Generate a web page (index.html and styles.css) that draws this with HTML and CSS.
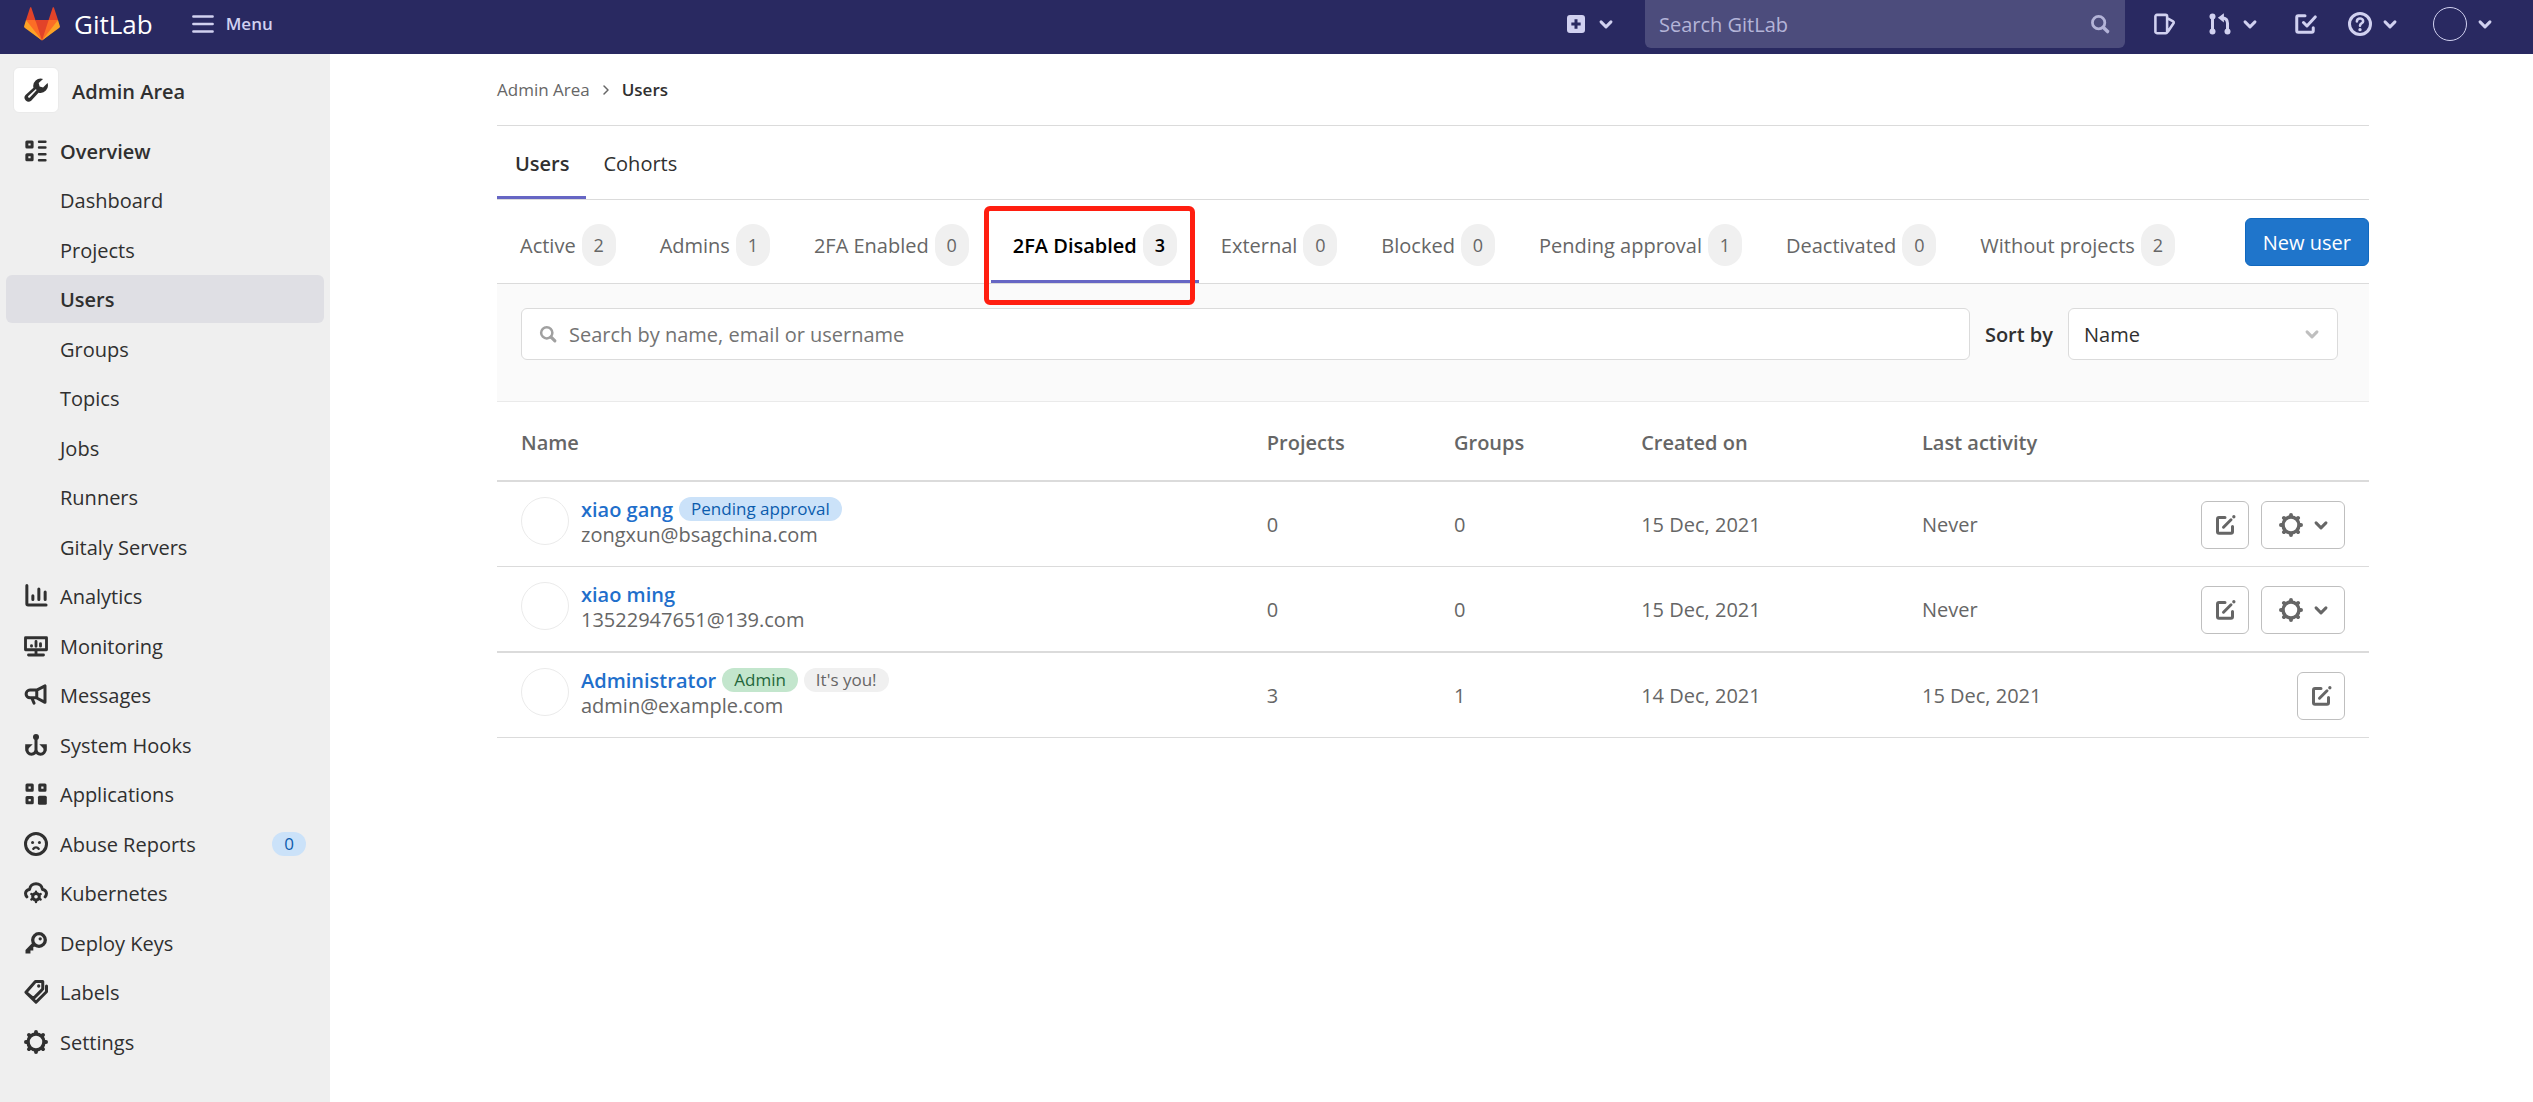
FILE: index.html
```html
<!DOCTYPE html>
<html lang="en">
<head>
<meta charset="utf-8">
<title>Users · Admin Area · GitLab</title>
<link rel="stylesheet" href="styles.css">
</head>
<body>
<svg class="sprite" aria-hidden="true">
  <symbol id="i-chevron" viewBox="0 0 16 16"><path class="s2" d="M4.7 6.6 8 9.900l3.300-3.300"/></symbol>
  <symbol id="i-menu" viewBox="0 0 16 16"><path class="s2" d="M1.600 3h12.800M1.600 8h12.800M1.600 13h12.800" stroke-width="1.700"/></symbol>
  <symbol id="i-plus" viewBox="0 0 16 16"><path class="f" fill-rule="evenodd" d="M4 2h8a2 2 0 0 1 2 2v8a2 2 0 0 1-2 2H4a2 2 0 0 1-2-2V4a2 2 0 0 1 2-2zm3 2.900V7H4.900v2H7v2.100h2V9h2.100V7H9V4.900z"/></symbol>
  <symbol id="i-search" viewBox="0 0 16 16"><circle class="s2" cx="7" cy="7" r="4.500"/><path class="s2" d="m10.500 10.500 3 3" stroke-width="2.500"/></symbol>
  <symbol id="i-issues" viewBox="0 0 16 16"><path class="s2" stroke-width="1.700" d="M2.600 1.900h5.800a1 1 0 0 1 1 1v10.200a1 1 0 0 1-1 1H2.600a1 1 0 0 1-1-1V2.900a1 1 0 0 1 1-1zM9.800 4.300l3.600 1.900c.5.300.6.600.4 1.100L10 13"/></symbol>
  <symbol id="i-merge" viewBox="0 0 16 16"><path class="s2" d="M3 4v8M13 12V7.500C13 5.200 11.800 4 9.500 3.800"/><path class="f" d="M10.600.8v6.200L6.600 3.900z"/><circle class="f" cx="3" cy="3" r="2"/><circle class="f" cx="3" cy="13" r="2"/><circle class="f" cx="13" cy="13" r="2"/></symbol>
  <symbol id="i-todo" viewBox="0 0 16 16"><path class="s2" d="M8 2.500H3.500a1 1 0 0 0-1 1v9a1 1 0 0 0 1 1h9a1 1 0 0 0 1-1V10.500M7 7l2.300 2.300 5.500-6"/></symbol>
  <symbol id="i-help" viewBox="0 0 16 16"><circle class="s2" cx="8" cy="8" r="7"/><path class="s2" stroke-width="1.700" d="M5.900 6.300C6 5 6.900 4.300 8 4.300s2.100.8 2.100 1.800c0 1.500-2.100 1.400-2.100 3"/><circle class="f" cx="8" cy="11.800" r="1.100"/></symbol>
  <symbol id="i-wrench" viewBox="0 0 16 16"><path class="f" fill-rule="evenodd" d="M12.700.6a5 5 0 0 0-6.400 5.900L1 11.300a2.700 2.700 0 0 0 3.800 3.800l4.900-5.300a5 5 0 0 0 6-6.400l-3 2.900-2.300-.6-.6-2.300zM7.600 7.600c.4-.3 1 .3.600.7L3.900 13c-.6.600-1.600-.4-1-1z"/></symbol>
  <symbol id="i-overview" viewBox="0 0 16 16"><path class="s2" d="M1.900 2h3.500v3.400H1.900zM1.900 10.500h3.500v3.400H1.900z"/><path class="s2" stroke-width="1.600" d="M10 1.800h4.300M10 5.700h4.300M10 10.200h4.300M10 14.200h4.300"/></symbol>
  <symbol id="i-chart" viewBox="0 0 16 16"><path class="s2" d="M1.900 1v12.200c0 .5.300.8.800.8h12M5.900 7.800v2.600M9.900 3.300v7.100M14.100 5.300v5.100"/></symbol>
  <symbol id="i-monitor" viewBox="0 0 16 16"><path class="s2" d="M1 2.500h14v8H1zM3 14h10M8 11v2.500M8 5v3.200M5 7.700v.4M11 6.500v1.600" stroke-width="1.900"/></symbol>
  <symbol id="i-messages" viewBox="0 0 16 16"><path class="s2" d="M8.500 4.700 14 1.900v11L8.500 10M8.500 4.700v5.200M8.500 4.700H4a2.600 2.600 0 0 0 0 5.200h4.500M5.200 10l1.500 3.400"/></symbol>
  <symbol id="i-hook" viewBox="0 0 16 16"><circle class="f" cx="8" cy="2.600" r="2"/><path class="s2" d="M8 4v8M8 11.500c-.3 1.700-1.600 2.600-3 2.600C3 14.100 2 12.600 2 11V9M8 11.500c.3 1.700 1.600 2.600 3 2.600 2 0 3-1.500 3-3.100V9"/><path class="f" d="M.8 7.500h5L1 12.400zM15.200 7.500h-5l4.800 4.900z"/></symbol>
  <symbol id="i-apps" viewBox="0 0 16 16"><path class="s2" d="M2 2h3.500v3.500H2zM10.500 2H14v3.500h-3.500zM2 10.400h3.500v3.500H2z"/><rect class="f" x="9.300" y="9.200" width="5.900" height="5.900" rx="1"/></symbol>
  <symbol id="i-abuse" viewBox="0 0 16 16"><circle class="s2" cx="8" cy="8" r="7"/><circle class="f" cx="5.700" cy="7" r="1"/><circle class="f" cx="10.300" cy="7" r="1"/><path class="s2" stroke-width="1.600" d="M6.200 11.200c.8-1.300 2.800-1.300 3.600 0"/></symbol>
  <symbol id="i-cloud" viewBox="0 0 16 16"><path class="s2" d="M1.900 10.600C.1 8.300 1.400 5.700 3.700 5.600 4 3.200 5.900 1.900 8 1.900s4 1.300 4.300 3.700c2.300.1 3.600 2.700 1.800 5"/><circle class="s2" cx="8" cy="10.500" r="2.200"/><path class="s2" stroke-width="1.600" d="M8 7.500v-.4M8 13.500v.5M5.400 9l-.5-.3M10.600 9l.5-.3M5.400 12l-.5.300M10.600 12l.5.300"/></symbol>
  <symbol id="i-key" viewBox="0 0 16 16"><circle class="s2" cx="10" cy="6" r="4.200" stroke-width="2.200"/><circle class="f" cx="10.800" cy="5.200" r="1.100"/><path class="f" d="m6 7.500-5 5.100V15h3.300v-2h1.900v-2.300L8.500 10z"/></symbol>
  <symbol id="i-labels" viewBox="0 0 16 16"><path class="s2" d="M7.600 1h4.900v5L6.200 12.300 1.300 8.200zM15 4v3.800L8 14.800 1.500 8.400M11.500 7.200l-5 5"/><circle class="f" cx="9.800" cy="4" r="1.100"/></symbol>
  <symbol id="i-gear" viewBox="0 0 16 16"><circle class="s2" cx="8" cy="8" r="5.300" stroke-width="2.300"/><path class="s2" stroke-width="2.600" d="M8 1.900v-.6M8 14.100v.6M1.900 8h-.6M14.100 8h.6M3.700 3.700l-.4-.4M12.300 3.700l.4-.4M3.700 12.300l-.4.4M12.300 12.300l.4.4"/></symbol>
  <symbol id="i-edit" viewBox="0 0 16 16"><path class="s2" d="M8 3H4a1 1 0 0 0-1 1v8.500a1 1 0 0 0 1 1h8a1 1 0 0 0 1-1V9M7 9.500l5-5"/><circle class="f" cx="13.900" cy="2.500" r="1.100"/></symbol>
</svg>

<header class="topbar">
  <a class="brand" href="#">
    <svg class="tanuki" viewBox="0 0 36 36" aria-hidden="true"><path fill="#e24329" d="M2 14l9.380 9v-9l-4-12.280c-.205-.632-1.176-.632-1.380 0zM34 14l-9.380 9v-9l4-12.280c.205-.632 1.176-.632 1.380 0zM18 34.380 3 14h30z"/><path fill="#fc6d26" d="M18 34.380 11.380 14H2l4 11zM18 34.380 24.620 14H34l-4 11z"/><path fill="#fca326" d="M2 14 .1 20.160c-.180.565 0 1.200.5 1.560L18 34.380zM34 14l1.900 6.160c.180.565 0 1.200-.5 1.560L18 34.380z"/></svg>
    <span>GitLab</span>
  </a>
  <button class="nav-btn menu" type="button"><svg class="icon"><use href="#i-menu"/></svg>Menu</button>
  <div class="spacer"></div>
  <button class="nav-btn create" type="button" aria-label="Create new"><svg class="icon"><use href="#i-plus"/></svg><svg class="icon"><use href="#i-chevron"/></svg></button>
  <form class="global-search">
    <input type="search" placeholder="Search GitLab" aria-label="Search GitLab">
    <svg class="icon"><use href="#i-search"/></svg>
  </form>
  <nav class="tools" aria-label="Tools">
    <a class="nav-btn" href="#" aria-label="Issues"><svg class="icon"><use href="#i-issues"/></svg></a>
    <button class="nav-btn" type="button" aria-label="Merge requests"><svg class="icon"><use href="#i-merge"/></svg><svg class="icon"><use href="#i-chevron"/></svg></button>
    <a class="nav-btn" href="#" aria-label="To-do list"><svg class="icon"><use href="#i-todo"/></svg></a>
    <button class="nav-btn" type="button" aria-label="Help"><svg class="icon"><use href="#i-help"/></svg><svg class="icon"><use href="#i-chevron"/></svg></button>
    <button class="nav-btn" type="button" aria-label="Account"><span class="me"></span><svg class="icon"><use href="#i-chevron"/></svg></button>
  </nav>
</header>

<div class="page">
  <aside class="sidebar">
    <a class="context" href="#"><span class="context-icon"><svg class="icon"><use href="#i-wrench"/></svg></span><span class="context-name">Admin Area</span></a>
    <ul class="side-list">
      <li><a class="current" href="#"><svg class="icon"><use href="#i-overview"/></svg>Overview</a></li>
      <li><a class="sub" href="#">Dashboard</a></li>
      <li><a class="sub" href="#">Projects</a></li>
      <li><a class="sub current selected" href="#">Users</a></li>
      <li><a class="sub" href="#">Groups</a></li>
      <li><a class="sub" href="#">Topics</a></li>
      <li><a class="sub" href="#">Jobs</a></li>
      <li><a class="sub" href="#">Runners</a></li>
      <li><a class="sub" href="#">Gitaly Servers</a></li>
      <li><a href="#"><svg class="icon"><use href="#i-chart"/></svg>Analytics</a></li>
      <li><a href="#"><svg class="icon"><use href="#i-monitor"/></svg>Monitoring</a></li>
      <li><a href="#"><svg class="icon"><use href="#i-messages"/></svg>Messages</a></li>
      <li><a href="#"><svg class="icon"><use href="#i-hook"/></svg>System Hooks</a></li>
      <li><a href="#"><svg class="icon"><use href="#i-apps"/></svg>Applications</a></li>
      <li><a href="#"><svg class="icon"><use href="#i-abuse"/></svg>Abuse Reports<span class="badge info side-count">0</span></a></li>
      <li><a href="#"><svg class="icon"><use href="#i-cloud"/></svg>Kubernetes</a></li>
      <li><a href="#"><svg class="icon"><use href="#i-key"/></svg>Deploy Keys</a></li>
      <li><a href="#"><svg class="icon"><use href="#i-labels"/></svg>Labels</a></li>
      <li><a href="#"><svg class="icon"><use href="#i-gear"/></svg>Settings</a></li>
    </ul>
  </aside>

  <main class="main">
    <div class="container">
      <nav class="breadcrumb" aria-label="Breadcrumb">
        <a href="#">Admin Area</a>
        <svg class="crumb-sep" viewBox="0 0 12 12" aria-hidden="true"><path class="s2" stroke-width="1.500" d="m4 2 4 4-4 4"/></svg>
        <a class="here" href="#">Users</a>
      </nav>
      <nav class="tabs" aria-label="Sections">
        <a class="on" href="#">Users</a>
        <a href="#">Cohorts</a>
      </nav>
      <div class="filters">
        <nav class="filter-tabs" aria-label="User filters">
          <a href="#">Active<span class="count">2</span></a>
          <a href="#">Admins<span class="count">1</span></a>
          <a href="#">2FA Enabled<span class="count">0</span></a>
          <a class="on" href="#">2FA Disabled<span class="count">3</span><span class="highlight"></span></a>
          <a href="#">External<span class="count">0</span></a>
          <a href="#">Blocked<span class="count">0</span></a>
          <a href="#">Pending approval<span class="count">1</span></a>
          <a href="#">Deactivated<span class="count">0</span></a>
          <a href="#">Without projects<span class="count">2</span></a>
        </nav>
        <button class="primary" type="button">New user</button>
      </div>
      <form class="search-row">
        <div class="field">
          <svg class="icon"><use href="#i-search"/></svg>
          <input type="search" placeholder="Search by name, email or username" aria-label="Search users">
        </div>
        <label for="sort">Sort by</label>
        <div class="select">
          <select id="sort"><option>Name</option></select>
          <svg class="icon"><use href="#i-chevron"/></svg>
        </div>
      </form>
      <table class="users">
        <colgroup><col class="w40"><col class="w10"><col class="w10"><col class="w15"><col class="w15"><col class="w10"></colgroup>
        <thead>
          <tr><th>Name</th><th>Projects</th><th>Groups</th><th>Created on</th><th>Last activity</th><th aria-label="Actions"></th></tr>
        </thead>
        <tbody>
          <tr>
            <td><div class="user"><span class="avatar"></span><div><div class="who"><a href="#">xiao gang</a><span class="badge info">Pending approval</span></div><div class="mail">zongxun@bsagchina.com</div></div></div></td>
            <td>0</td><td>0</td><td>15 Dec, 2021</td><td>Never</td>
            <td><div class="actions"><button type="button" aria-label="Edit"><svg class="icon"><use href="#i-edit"/></svg></button><button class="wide" type="button" aria-label="User administration"><svg class="icon"><use href="#i-gear"/></svg><svg class="icon"><use href="#i-chevron"/></svg></button></div></td>
          </tr>
          <tr class="thick">
            <td><div class="user"><span class="avatar"></span><div><div class="who"><a href="#">xiao ming</a></div><div class="mail">13522947651@139.com</div></div></div></td>
            <td>0</td><td>0</td><td>15 Dec, 2021</td><td>Never</td>
            <td><div class="actions"><button type="button" aria-label="Edit"><svg class="icon"><use href="#i-edit"/></svg></button><button class="wide" type="button" aria-label="User administration"><svg class="icon"><use href="#i-gear"/></svg><svg class="icon"><use href="#i-chevron"/></svg></button></div></td>
          </tr>
          <tr>
            <td><div class="user"><span class="avatar"></span><div><div class="who"><a href="#">Administrator</a><span class="badge success">Admin</span><span class="badge muted">It's you!</span></div><div class="mail">admin@example.com</div></div></div></td>
            <td>3</td><td>1</td><td>14 Dec, 2021</td><td>15 Dec, 2021</td>
            <td><div class="actions"><button type="button" aria-label="Edit"><svg class="icon"><use href="#i-edit"/></svg></button></div></td>
          </tr>
        </tbody>
      </table>
    </div>
  </main>
</div>
</body>
</html>
```
FILE: styles.css
```css
* { box-sizing: border-box; }
body {
  margin: 0;
  min-height: 100vh;
  display: flex;
  flex-direction: column;
  background: #fff;
  color: #303030;
  font: 20px/28px "Open Sans", "Noto Sans", sans-serif;
}
a { color: inherit; text-decoration: none; }
button, input, select { font: inherit; color: inherit; margin: 0; }
button { cursor: pointer; }
.sprite { position: absolute; width: 0; height: 0; }
.s2 { fill: none; stroke: currentColor; stroke-linecap: round; stroke-linejoin: round; }
.s2:not([stroke-width]) { stroke-width: 2; }
.f { fill: currentColor; }
.icon { width: 24px; height: 24px; flex: none; display: block; }

/* Top bar */
.topbar {
  display: flex;
  align-items: center;
  height: 54px;
  padding: 0 36px 6px 24px;
  background: #292961;
  color: #d1d1f0;
}
.brand { display: flex; align-items: center; gap: 14px; color: #fff; font-size: 26px; }
.tanuki { width: 36px; height: 36px; }
.nav-btn {
  display: flex;
  align-items: center;
  padding: 0;
  border: 0;
  background: none;
  color: inherit;
}
.menu { gap: 11px; margin-left: 38px; font-size: 17px; font-weight: 600; }
.spacer { flex: 1; }
.create { margin-right: 27px; gap: 6px; }
.global-search {
  display: flex;
  align-items: center;
  width: 480px;
  height: 48px;
  padding: 0 14px;
  border-radius: 0 0 6px 6px;
  background: #4c4c7c;
  color: #b4b4d8;
}
.global-search input { flex: 1; min-width: 0; padding: 2px 0 0; border: 0; background: none; outline: 0; }
.global-search .icon { width: 22px; height: 22px; }
input::placeholder { color: inherit; opacity: 1; }
.tools { display: flex; align-items: center; gap: 31px; margin-left: 28px; }
.tools .nav-btn { gap: 6px; }
.me { width: 34px; height: 34px; border: 1px solid #d1d1f0; border-radius: 50%; }

/* Sidebar */
.page { display: flex; flex: 1; }
.sidebar { flex: none; width: 330px; background: #efefef; padding: 12px 6px; }
.context { display: flex; align-items: center; gap: 13px; height: 48px; padding-left: 7px; font-weight: 600; }
.context-name { padding-top: 3px; }
.context-icon {
  display: grid;
  place-items: center;
  width: 46px;
  height: 46px;
  border: 1px solid #eaeaea;
  border-radius: 6px;
  background: #fff;
}
.side-list { list-style: none; margin: 13px 0 0; padding: 0; }
.side-list li { margin-bottom: 1px; }
.side-list li:nth-child(even) { margin-bottom: 2px; }
.side-list a { display: flex; align-items: center; gap: 12px; height: 48px; padding: 2px 18px 0; border-radius: 6px; }
.side-list .sub { padding-left: 54px; }
.side-list .icon, .side-count { margin-bottom: 3px; }
.side-list .current { font-weight: 600; }
.side-list .selected { background: #dfdfe4; }
.side-count { margin-left: auto; }

.badge {
  height: 24px;
  padding: 0 12px;
  border-radius: 12px;
  font-size: 17px;
  line-height: 24px;
  font-weight: 400;
}
.info { background: #cbe2f9; color: #0b5cad; }
.success { background: #c3e6cd; color: #24663b; }
.muted { background: #f0f0f0; color: #666; }

/* Content */
.main { flex: 1; min-width: 0; padding-left: 3px; }
.container { max-width: 1920px; margin: 0 auto; padding: 0 24px; }
.breadcrumb {
  display: flex;
  align-items: center;
  height: 72px;
  border-bottom: 1px solid #dbdbdb;
  color: #666;
  font-size: 17px;
}
.crumb-sep { width: 12px; height: 12px; margin: 0 10px; }
.here { color: #303030; font-weight: 600; }
.tabs { display: flex; height: 74px; border-bottom: 1px solid #dbdbdb; }
.tabs a { display: flex; align-items: center; padding: 5px 17px 0 18px; border-bottom: 3px solid transparent; }
.tabs a + a { padding-left: 17px; }
.tabs .on { border-color: #6666c4; font-weight: 600; }
.filters {
  display: flex;
  justify-content: space-between;
  align-items: center;
  height: 84px;
  border-bottom: 1px solid #dbdbdb;
}
.filter-tabs { display: flex; padding-left: 1px; color: #666; white-space: nowrap; }
.filter-tabs a {
  position: relative;
  display: flex;
  align-items: center;
  gap: 6px;
  height: 83px;
  padding: 12px 22px 0;
  border-bottom: 3px solid transparent;
}
.filter-tabs .on { border-color: #6666c4; color: #000; font-weight: 600; }
.count {
  width: 34px;
  height: 42px;
  margin-bottom: 2px;
  border-radius: 17px;
  background: #f0f0f0;
  font-size: 18px;
  line-height: 42px;
  text-align: center;
}
/* Red call-out frame around the selected filter */
.highlight {
  position: absolute;
  top: 6px;
  right: 4px;
  bottom: -25px;
  left: -7px;
  border: 5px solid #ff1e10;
  border-radius: 6px;
}
.primary {
  height: 48px;
  padding: 2px 17px 0;
  border: 1px solid #1068bf;
  border-radius: 6px;
  background: #1f75cb;
  color: #fff;
  white-space: nowrap;
}
.search-row {
  display: flex;
  align-items: flex-start;
  padding: 24px 31px 41px 24px;
  border-bottom: 1px solid #eaeaea;
  background: #fafafa;
}
.search-row label { padding: 13px 15px 11px; font-weight: 600; }
.field, .select { display: flex; align-items: center; height: 52px; border: 1px solid #dbdbdb; border-radius: 6px; background: #fff; }
.field { flex: 1; padding: 0 16px; gap: 11px; color: #868686; }
.field .icon { width: 20px; height: 20px; color: #a0a0a0; }
.field input { flex: 1; min-width: 0; padding: 2px 0 0; border: 0; outline: 0; background: none; color: #737373; }
.select { position: relative; width: 270px; }
.select select { flex: 1; height: 50px; padding: 2px 15px 0; border: 0; background: none; appearance: none; outline: 0; }
.select .icon { position: absolute; right: 13px; color: #bfbfbf; pointer-events: none; }

.users { width: 100%; border-collapse: separate; border-spacing: 0; table-layout: fixed; color: #666; }
.w40 { width: 40%; }
.w10 { width: 10%; }
.w15 { width: 15%; }
.users th { height: 80px; padding: 4px 24px 0 21px; border-bottom: 2px solid #dbdbdb; text-align: left; font-weight: 600; }
.users td { height: 85px; padding: 1px 24px 0 21px; border-bottom: 1px solid #dbdbdb; }
.users th:first-child, .users td:first-child { padding-left: 24px; }
.users .thick td { height: 86px; border-bottom-width: 2px; }
.user { display: flex; gap: 12px; align-items: flex-start; padding-bottom: 4px; }
.avatar { flex: none; width: 48px; height: 48px; border: 1px solid #ebebeb; border-radius: 50%; }
.who { display: flex; gap: 6px; align-items: center; height: 24px; }
.who a { padding-top: 2px; color: #1f6fcb; font-weight: 600; }
.mail { line-height: 28px; }
.actions { display: flex; justify-content: flex-end; gap: 12px; }
.actions button {
  display: flex;
  align-items: center;
  justify-content: center;
  gap: 6px;
  flex: none;
  width: 48px;
  height: 48px;
  padding: 0;
  border: 1px solid #bfbfbf;
  border-radius: 6px;
  background: #fff;
}
.actions .wide { width: 84px; padding-left: 6px; }
```
